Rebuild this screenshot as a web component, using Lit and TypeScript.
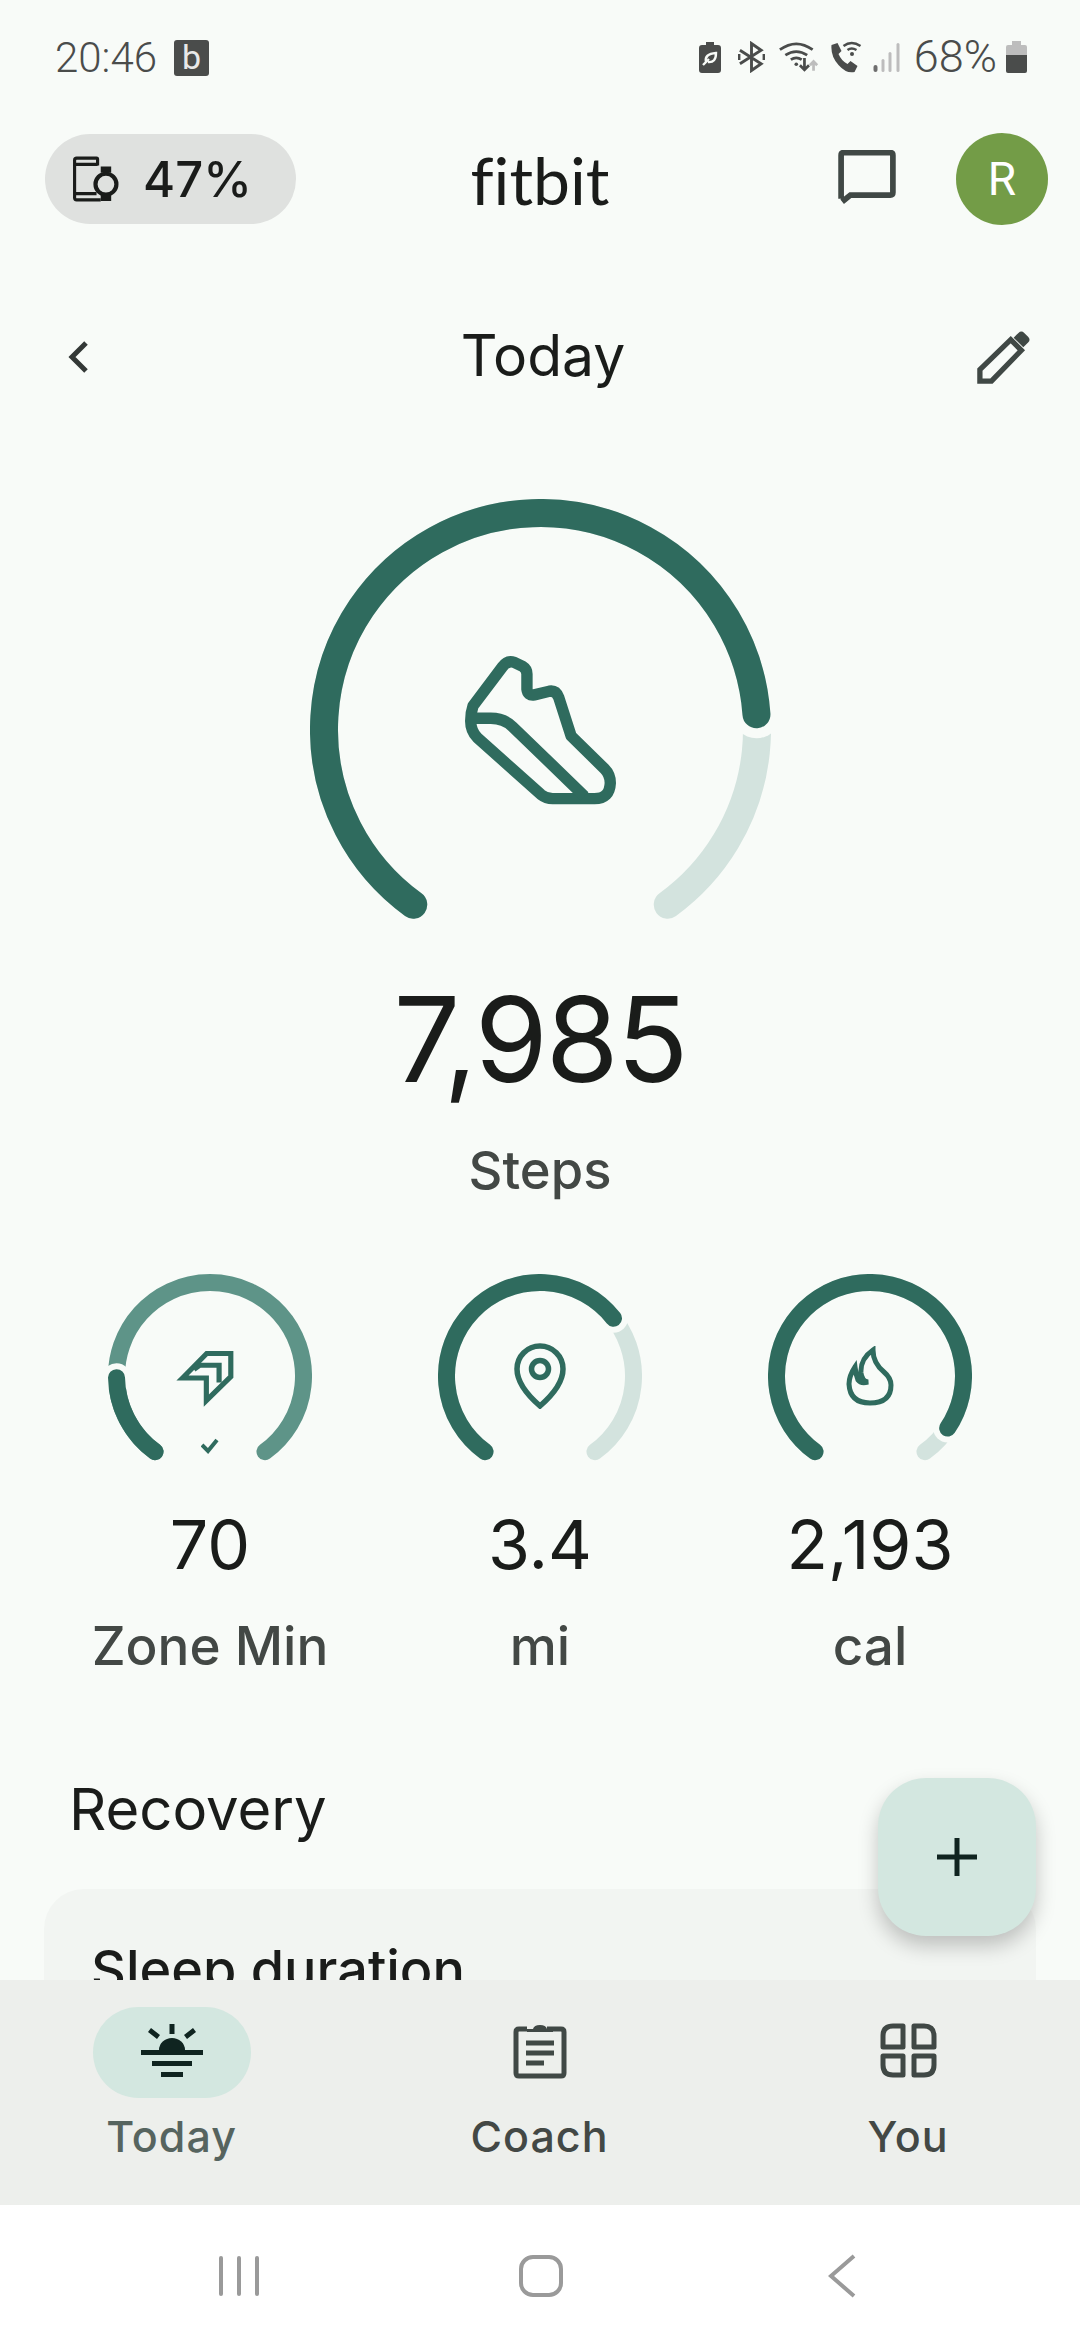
import { LitElement, html, css, svg } from 'lit';
import { customElement, property } from 'lit/decorators.js';

const DARK = '#2f6b5e';
const LIGHT = '#d3e3de';
const MID = '#5e9488';
const PAGE = '#f8fbf8';

// angles are clockwise from 12 o'clock, the gauge runs 216deg -> 504deg
const START = 216;
const SWEEP = 288;

function pt(r: number, deg: number, c: number) {
  const a = (deg * Math.PI) / 180;
  return [c + r * Math.sin(a), c - r * Math.cos(a)];
}

function arc(r: number, from: number, to: number, c: number) {
  const [x1, y1] = pt(r, from, c);
  const [x2, y2] = pt(r, to, c);
  const large = to - from > 180 ? 1 : 0;
  return `M${x1} ${y1}A${r} ${r} 0 ${large} 1 ${x2} ${y2}`;
}

@customElement('gauge-ring')
export class GaugeRing extends LitElement {
  @property({ type: Number }) size = 204;
  @property({ type: Number }) stroke = 17;
  @property({ type: Number }) gap = 6;
  @property({ type: Number }) value = 0.5;
  @property({ type: String }) track = LIGHT;

  static styles = css`
    :host {
      display: block;
      position: relative;
    }
    svg {
      display: block;
    }
    .inner {
      position: absolute;
      inset: 0;
      display: flex;
      align-items: center;
      justify-content: center;
    }
  `;

  render() {
    const c = this.size / 2;
    const r = c - this.stroke / 2;
    const end = START + SWEEP * this.value;
    const [nx, ny] = pt(r, end, c);
    return html`
      <svg width=${this.size} height=${this.size} viewBox="0 0 ${this.size} ${this.size}" fill="none">
        ${svg`<path d=${arc(r, START, START + SWEEP, c)} stroke=${this.track} stroke-width=${this.stroke} stroke-linecap="round"></path>`}
        ${svg`<circle cx=${nx} cy=${ny} r=${this.stroke / 2 + this.gap} fill=${PAGE}></circle>`}
        ${svg`<path d=${arc(r, START, end, c)} stroke=${DARK} stroke-width=${this.stroke} stroke-linecap="round"></path>`}
      </svg>
      <div class="inner"><slot></slot></div>
    `;
  }
}

@customElement('app-root')
export class AppRoot extends LitElement {
  static styles = css`
    :host {
      display: block;
      width: 1080px;
      height: 2340px;
      overflow: hidden;
      position: relative;
      background: #f8fbf8;
      font-family: Inter, Roboto, sans-serif;
      color: #1a1c1a;
    }
    .status {
      height: 78px;
      padding: 36px 53px 0 55px;
      box-sizing: border-box;
      display: flex;
      align-items: flex-start;
      color: #4a4c4b;
      font-family: Roboto, sans-serif;
      font-weight: 300;
      font-size: 42px;
      line-height: 44px;
    }
    .b-box {
      width: 35px;
      height: 36px;
      margin: 4px 0 0 17px;
      background: #4a4c4b;
      color: #e8e8e8;
      border-radius: 3px;
      font-size: 34px;
      line-height: 34px;
      font-weight: 400;
      text-align: center;
    }
    .status-right {
      margin-left: auto;
      margin-top: 3px;
      display: flex;
      align-items: center;
      height: 36px;
    }
    .pct {
      margin-left: 13px;
      margin-right: 9px;
      font-size: 45px;
    }
    .topbar {
      height: 90px;
      margin-top: 56px;
      padding: 0 32px 0 45px;
      display: flex;
      align-items: center;
      justify-content: space-between;
      position: relative;
    }
    .pill {
      width: 251px;
      height: 90px;
      border-radius: 45px;
      background: #dfe1df;
      box-sizing: border-box;
      padding-left: 27px;
      display: flex;
      align-items: center;
      gap: 24px;
      font-size: 49px;
      font-weight: 500;
    }
    .logo {
      position: absolute;
      left: 0;
      right: 0;
      text-align: center;
      font-size: 66px;
      font-weight: 400;
      font-family: Lato, sans-serif;
      font-variant-ligatures: none;
      color: #1a1c1a;
      pointer-events: none;
    }
    .top-right {
      display: flex;
      align-items: center;
      gap: 60px;
    }
    .avatar {
      width: 92px;
      height: 92px;
      border-radius: 50%;
      background: #739c47;
      color: #fff;
      font-family: Roboto, sans-serif;
      font-size: 46px;
      display: flex;
      align-items: center;
      justify-content: center;
    }
    .datebar {
      margin-top: 88px;
      height: 90px;
      padding: 0 49px 0 56px;
      display: flex;
      align-items: center;
      justify-content: space-between;
      font-size: 57px;
    }
    .date-title {
      margin: 0 0 3px 9px;
    }
    .hero {
      display: flex;
      flex-direction: column;
      align-items: center;
      margin-top: 97px;
    }
    .hero-num {
      font-size: 118px;
      line-height: 140px;
      margin-top: 9px;
      font-weight: 400;
      letter-spacing: -2px;
    }
    .hero-label {
      font-size: 52.500px;
      line-height: 62px;
      margin-top: 30px;
      color: #434845;
      font-weight: 450;
    }
    .stats {
      display: grid;
      grid-template-columns: repeat(3, 330px);
      justify-content: center;
      margin-top: 73px;
    }
    .stat {
      display: flex;
      flex-direction: column;
      align-items: center;
    }
    .stat-num {
      font-size: 68px;
      line-height: 76px;
      margin-top: 28px;
    }
    .stat-label {
      font-size: 53px;
      line-height: 60px;
      margin-top: 34px;
      color: #434845;
      font-weight: 450;
    }
    .zone-icon {
      margin: 6px 8px 0 0;
    }
    .check {
      position: absolute;
      left: 93px;
      top: 164px;
    }
    .section {
      font-size: 58px;
      line-height: 70px;
      margin: 98px 0 0 69px;
    }
    .card {
      margin: 45px 44px 0;
      height: 300px;
      border-radius: 40px;
      background: #f2f5f2;
      padding: 48px 47px;
      box-sizing: border-box;
      font-size: 54px;
      font-weight: 450;
    }
    .fab {
      position: absolute;
      left: 878px;
      top: 1778px;
      width: 158px;
      height: 158px;
      border-radius: 48px;
      background: #d3e7e0;
      box-shadow: 0 10px 20px rgba(0, 0, 0, 0.22);
      display: flex;
      align-items: center;
      justify-content: center;
    }
    .bottom {
      position: absolute;
      left: 0;
      right: 0;
      bottom: 0;
    }
    .tabs {
      height: 225px;
      padding-top: 27px;
      box-sizing: border-box;
      background: #edefec;
      display: grid;
      grid-template-columns: 343px 393px 344px;
    }
    .tab {
      display: flex;
      flex-direction: column;
      align-items: center;
      color: #434845;
      font-size: 43px;
      font-weight: 450;
      letter-spacing: 1px;
    }
    .tab-icon {
      width: 158px;
      height: 91px;
      box-sizing: border-box;
      padding-bottom: 4px;
      border-radius: 46px;
      display: flex;
      align-items: center;
      justify-content: center;
      margin-bottom: 12px;
    }
    .tab.on .tab-icon {
      background: #d3e7e0;
    }
    .tab.on {
      color: #56645f;
    }
    .navbar {
      height: 135px;
      padding-top: 6px;
      box-sizing: border-box;
      background: #fff;
      display: grid;
      grid-template-columns: 478px 126px 476px;
    }
    .navbar > div {
      display: flex;
      align-items: center;
      justify-content: center;
    }
  `;

  render() {
    return html`
      <div class="status">
        <span>20:46</span>
        <span class="b-box">b</span>
        <div class="status-right">
          <svg width="24" height="32" viewBox="0 0 22 32"><path fill="#4a4c4b" d="M3 4h4V1h8v3h4q3 0 3 3v22q0 3-3 3H3q-3 0-3-3V7q0-3 3-3z"/><path fill="none" stroke="#f8fbf8" stroke-width="2.4" d="M4 24q4-4 6-6M7 21q-2-8 10-9 0 10-8 9"/></svg>
          <svg style="margin-left:16px" width="27" height="32" viewBox="0 0 28 32" fill="none" stroke="#4a4c4b" stroke-width="3"><path d="M2 9l22 14-10 7V2l10 7-22 14"/><path d="M1 13v6M27 13v6" stroke-width="3"/></svg>
          <svg style="margin-left:14px" width="40" height="32" viewBox="0 0 44 34" fill="none" stroke="#4a4c4b" stroke-width="3"><path d="M1 9q18-13 36 0M7 15q12-8 24 0M13 20q6-4 12 0"/><circle cx="19" cy="25" r="2" fill="#4a4c4b" stroke="none"/><path d="M28 18v13M23 26l5 5 5-5"/><path d="M38 32V22M34 26l4-4 4 4" stroke="#bdbdbd"/></svg>
          <svg style="margin-left:10px" width="33" height="32" viewBox="0 0 32 32"><path fill="#4a4c4b" d="M2 4l6-2 4 8-3 3q3 7 9 10l3-3 7 5-3 6q-8 2-16-7T2 4z"/><path fill="none" stroke="#4a4c4b" stroke-width="2.4" d="M14 5q8-6 17 0M18 9q4-3 9 0"/><circle cx="22.5" cy="13" r="2" fill="#4a4c4b"/></svg>
          <svg style="margin-left:11px" width="28" height="30" viewBox="0 0 27 30" fill="#bdbdbd"><rect x="0" y="23" width="4" height="7" rx="2" fill="#6e6e6e"/><rect x="8" y="17" width="3" height="13" rx="1.5"/><rect x="15" y="10" width="3" height="20" rx="1.5"/><rect x="23" y="1" width="3" height="29" rx="1.5"/></svg>
          <span class="pct">68%</span>
          <svg width="21" height="32" viewBox="0 0 21 32"><path fill="#bdbdbd" d="M2 4h4V0h9v4h4q2 0 2 2v10H0V6q0-2 2-2z"/><path fill="#4a4c4b" d="M0 14h21v16q0 2-2 2H2q-2 0-2-2z"/></svg>
        </div>
      </div>

      <div class="topbar">
        <div class="pill">
          <svg width="47" height="46" viewBox="0 0 44 44" fill="none" stroke="#1a1c1a" stroke-width="3"><path d="M24 9V3q0-1-1-1H4Q2 2 2 4v36q0 2 2 2h23"/><path d="M2 8h22M2 36h21"/><circle cx="32" cy="27" r="10" stroke-width="4"/><path d="M27 10h10v6H27zM27 37h10v6H27z" fill="#1a1c1a" stroke="none"/></svg>
          <span>47%</span>
        </div>
        <div class="logo">fitbit</div>
        <div class="top-right">
          <svg width="58" height="58" viewBox="0 0 56 56" fill="none"><path d="M3 47V5q0-2.500 2.500-2.500h45Q53 2.500 53 5v36q0 2.500-2.500 2.500H12L4 50" stroke="#404845" stroke-width="5.500"/></svg>
          <div class="avatar">R</div>
        </div>
      </div>

      <div class="datebar">
        <svg width="44" height="44" viewBox="0 0 44 44" fill="none"><path d="M30 8L16 22l14 14" stroke="#333836" stroke-width="5"/></svg>
        <span class="date-title">Today</span>
        <svg width="54" height="54" viewBox="0 0 56 56" fill="none" stroke="#404845" stroke-width="5.500"><path d="M3 53V41L35 10 46 21 15 53Z"/><path d="M38 8L43 3q3-3 6 0l4 4q3 3 0 6l-5 5z" fill="#404845" stroke="none"/></svg>
      </div>

      <div class="hero">
        <gauge-ring size="461" stroke="28" gap="10" value="0.7985">
          <svg width="154" height="154" viewBox="522 522 460 460" fill="none" stroke=${DARK} stroke-width="34" stroke-linejoin="round">
            <path d="M552 680L640 563Q655 543 675 550L700 562Q713 570 713 585V630Q715 650 735 647L780 636Q800 633 808 655L845 770L945 868Q962 885 962 910Q960 957 915 957H790Q770 957 755 945L565 775Q545 755 545 725Q545 700 552 680Z"/>
            <path d="M548 717H605Q645 717 670 742L885 950"/>
          </svg>
        </gauge-ring>
        <div class="hero-num">7,985</div>
        <div class="hero-label">Steps</div>
      </div>

      <div class="stats">
        <div class="stat">
          <gauge-ring value="0.184" track=${MID}>
            <svg class="zone-icon" width="62" height="62" viewBox="290 300 180 180" fill="none" stroke=${DARK} stroke-width="15"><path d="M312 387L382 316H452V383L381 453V387Z"/><path d="M345 362L362 350H418V400"/></svg>
            <svg class="check" width="18" height="16" viewBox="0 0 18 16" fill="none" stroke=${DARK} stroke-width="4"><path d="M1 7l6 6L16 2"/></svg>
          </gauge-ring>
          <div class="stat-num">70</div>
          <div class="stat-label">Zone Min</div>
        </div>
        <div class="stat">
          <gauge-ring value="0.68">
            <svg width="52" height="66" viewBox="0 0 52 66" fill="none" stroke=${DARK} stroke-width="5.500"><path d="M26 63Q3 43 3 26a23 23 0 0 1 46 0Q49 43 26 63Z"/><circle cx="26" cy="26" r="8.500"/></svg>
          </gauge-ring>
          <div class="stat-num">3.4</div>
          <div class="stat-label">mi</div>
        </div>
        <div class="stat">
          <gauge-ring value="0.93">
            <svg width="48" height="60" viewBox="0 0 48 60" fill="none" stroke=${DARK} stroke-width="5"><path d="M27 4Q14 13 15 27q1 8 7 9-7 2-10-2-2-5-3-13Q3 30 3 38q1 19 21 19 21 0 21-18 0-7-7-13-11-9-11-22z"/></svg>
          </gauge-ring>
          <div class="stat-num">2,193</div>
          <div class="stat-label">cal</div>
        </div>
      </div>

      <div class="section">Recovery</div>
      <div class="card">Sleep duration</div>

      <div class="fab">
        <svg width="40" height="38" viewBox="0 0 40 38" fill="none" stroke="#0f2420" stroke-width="5"><path d="M0 19h40M20 0v38"/></svg>
      </div>

      <div class="bottom">
        <div class="tabs">
          <div class="tab on">
            <div class="tab-icon">
              <svg width="62" height="54" viewBox="0 0 62 54" fill="#0f2420"><rect x="0" y="26" width="62" height="5"/><rect x="11" y="37" width="40" height="5"/><rect x="20" y="48" width="22" height="5"/><path d="M18 26a13 12 0 0 1 26 0z"/><rect x="28.500" y="0" width="5" height="10"/><path d="M7 8l3-4 9 7-3 4zM55 8l-3-4-9 7 3 4z"/></svg>
            </div>
            Today
          </div>
          <div class="tab">
            <div class="tab-icon">
              <svg width="54" height="56" viewBox="0 0 54 54" fill="none" stroke="#404845" stroke-width="5"><path d="M14 5H6q-3 0-3 3v41q0 3 3 3h42q3 0 3-3V8q0-3-3-3H34"/><path d="M14 8V5h6q1-4 7-4t7 4h6v3z" fill="#404845" stroke="none"/><path d="M13 19h28M13 29h28M13 39h18"/></svg>
            </div>
            Coach
          </div>
          <div class="tab">
            <div class="tab-icon">
              <svg width="57" height="55" viewBox="0 0 57 55" fill="none" stroke="#404845" stroke-width="5" stroke-linejoin="round"><path d="M23 24H3V13q0-10 10-10h10zM34 24h20V13q0-10-10-10H34zM23 33H3v9q0 10 10 10h10zM34 33h20v9q0 10-10 10H34z"/></svg>
            </div>
            You
          </div>
        </div>

        <div class="navbar">
          <div><svg width="40" height="40" viewBox="0 0 40 40" fill="#9a9a9a"><rect x="0" y="0" width="4" height="40" rx="2"/><rect x="18" y="0" width="4" height="40" rx="2"/><rect x="36" y="0" width="4" height="40" rx="2"/></svg></div>
          <div><svg width="44" height="42" viewBox="0 0 44 42" fill="none" stroke="#9a9a9a" stroke-width="4"><rect x="2" y="2" width="40" height="38" rx="12"/></svg></div>
          <div><svg width="28" height="44" viewBox="0 0 28 44" fill="none" stroke="#9a9a9a" stroke-width="4"><path d="M26 2L3 22l23 20"/></svg></div>
        </div>
      </div>
    `;
  }
}
